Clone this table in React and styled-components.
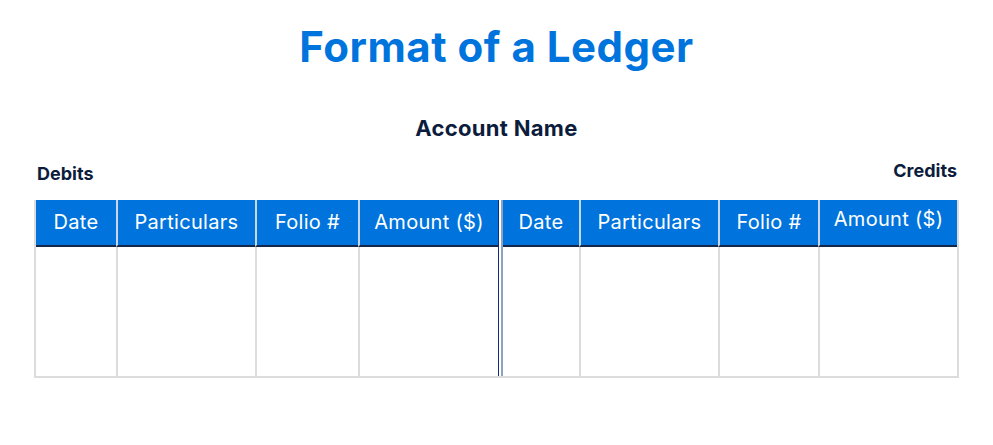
import React from "react";
import styled, { createGlobalStyle } from "styled-components";

const Global = createGlobalStyle`
  html, body { margin: 0; padding: 0; background: #ffffff; }
  body { font-family: Inter, "Noto Sans", sans-serif; }
`;

const Page = styled.div`
  width: 993px;
  height: 445px;
  box-sizing: border-box;
  padding: 22px 34px 0;
  display: flex;
  flex-direction: column;
  background: #fff;
`;

const Title = styled.h1`
  margin: 0;
  text-align: center;
  font-size: 42px;
  line-height: 50px;
  font-weight: 700;
  color: #0074dd;
  letter-spacing: 0.5px;
`;

const AccountName = styled.h2`
  margin: 43px 0 0;
  text-align: center;
  font-size: 22px;
  line-height: 26px;
  font-weight: 700;
  color: #0c1c3c;
  letter-spacing: 0.3px;
`;

const LabelRow = styled.div`
  display: flex;
  justify-content: space-between;
  align-items: flex-start;
  margin-top: 19px;
  padding: 0 2px 0 3px;
`;

const SideLabel = styled.span`
  font-size: 18px;
  line-height: 22px;
  font-weight: 700;
  color: #0c1c3c;
  margin-top: ${(p) => p.$offset || 0}px;
`;

const Ledger = styled.div`
  margin-top: 15px;
  display: flex;
  border-left: 2px solid #dcdcdc;
  border-right: 2px solid #dcdcdc;
  border-bottom: 2px solid #dcdcdc;
`;

const Side = styled.div`
  display: grid;
  grid-template-columns: ${(p) => p.$cols};
  grid-template-rows: 47px 129px;
  border-left: ${(p) => (p.$split ? "2px solid #8ea3c4" : "none")};
  border-right: ${(p) => (p.$divider ? "1px solid #0e2f7a" : "none")};
  margin-left: ${(p) => (p.$split ? "2px" : "0")};
`;

const HeadCell = styled.div`
  background: #0074dc;
  color: #ffffff;
  font-size: 20px;
  font-weight: 400;
  letter-spacing: 0.3px;
  display: flex;
  align-items: center;
  justify-content: center;
  padding-bottom: ${(p) => (p.$raise ? 7 : 2)}px;
  box-sizing: border-box;
  border-left: ${(p) => (p.$first ? "none" : "2px solid #c9d6e6")};
  border-bottom: 2px solid #15284c;
  white-space: nowrap;
`;

const BodyCell = styled.div`
  background: #ffffff;
  border-left: ${(p) => (p.$first ? "none" : "2px solid #dcdcdc")};
`;

const columns = ["Date", "Particulars", "Folio #", "Amount ($)"];

function LedgerSide({ cols, split, divider, raised = [] }) {
  return (
    <Side $cols={cols} $split={split} $divider={divider}>
      {columns.map((c, i) => (
        <HeadCell key={c} $first={i === 0} $raise={raised.includes(i)}>
          {c}
        </HeadCell>
      ))}
      {columns.map((c, i) => (
        <BodyCell key={c} $first={i === 0} />
      ))}
    </Side>
  );
}

export default function App() {
  return (
    <>
      <Global />
      <Page>
        <Title>Format of a Ledger</Title>
        <AccountName>Account Name</AccountName>
        <LabelRow>
          <SideLabel $offset={3}>Debits</SideLabel>
          <SideLabel>Credits</SideLabel>
        </LabelRow>
        <Ledger>
          <LedgerSide cols="80px 139px 103px 140px" divider />
          <LedgerSide cols="76px 139px 100px 139px" split raised={[3]} />
        </Ledger>
      </Page>
    </>
  );
}
